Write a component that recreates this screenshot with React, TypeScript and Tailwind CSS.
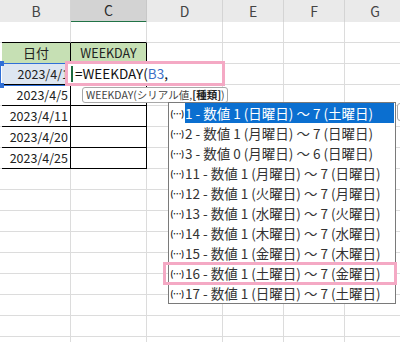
import React from "react";

const widths = [2, 69, 76, 76, 61, 61, 61];
const letters = ["", "B", "C", "D", "E", "F", "G"];

const items = [
  "1 - 数値 1 (日曜日) ～ 7 (土曜日)",
  "2 - 数値 1 (月曜日) ～ 7 (日曜日)",
  "3 - 数値 0 (月曜日) ～ 6 (日曜日)",
  "11 - 数値 1 (月曜日) ～ 7 (日曜日)",
  "12 - 数値 1 (火曜日) ～ 7 (月曜日)",
  "13 - 数値 1 (水曜日) ～ 7 (火曜日)",
  "14 - 数値 1 (木曜日) ～ 7 (水曜日)",
  "15 - 数値 1 (金曜日) ～ 7 (木曜日)",
  "16 - 数値 1 (土曜日) ～ 7 (金曜日)",
  "17 - 数値 1 (日曜日) ～ 7 (土曜日)",
];

const dates: Record<number, string> = {
  3: "2023/4/1",
  4: "2023/4/5",
  5: "2023/4/11",
  6: "2023/4/20",
  7: "2023/4/25",
};

function Cell({ r, c }: { r: number; c: number }) {
  const inTable = r >= 2 && r <= 7 && (c === 1 || c === 2);
  const rightBlack = inTable || (c === 0 && r >= 2 && r <= 7);
  const bottomBlack = inTable || (r === 1 && (c === 1 || c === 2));
  const green = r === 2 && (c === 1 || c === 2);
  const sel = r === 3 && c === 1;
  let cls =
    "h-full border-b flex items-center overflow-hidden whitespace-nowrap text-[12.5px] text-[#222] ";
  if (c === 0) {
    cls += rightBlack ? "border-r border-r-black " : "";
  } else {
    cls += rightBlack ? "border-r border-r-black " : "border-r border-r-[#dcdcdc] ";
  }
  cls += bottomBlack ? "border-b-black " : "border-b-[#dcdcdc] ";
  if (green) cls += "bg-[#c6e0b4] justify-center ";
  else if (sel) cls += "bg-[#dde6f1] justify-end pr-[1px] ";
  else cls += "bg-white justify-end pr-[2px] ";
  let text: React.ReactNode = "";
  if (r === 2 && c === 1) text = <span className="text-[13px]">日付</span>;
  if (r === 2 && c === 2) text = <span className="text-[12.5px]">WEEKDAY</span>;
  if (c === 1 && dates[r]) text = dates[r];
  return <div className={cls}>{text}</div>;
}

export default function App() {
  const rows = Array.from({ length: 16 }, (_, i) => i + 1);
  return (
    <div className="relative w-[400px] h-[342px] overflow-hidden bg-white font-['Noto_Sans_CJK_JP',sans-serif]">
      <div className="grid h-[22px] grid-cols-[2px_69px_76px_76px_61px_61px_61px] w-[406px]">
        {letters.map((l, i) => (
          <div
            key={i}
            className={
              i === 2
                ? "h-full flex items-center justify-center bg-[#d3d3d3] border-r border-r-[#c8c8c8] border-b-2 border-b-[#217346] text-[14px] text-[#2a2a2a]"
                : i === 0
                ? "h-full bg-[#eaeaea] border-b border-b-[#c8c8c8]"
                : "h-full flex items-center justify-center bg-[#eaeaea] border-r border-r-[#d4d4d4] border-b border-b-[#c8c8c8] text-[14px] text-[#444]"
            }
          >
            {l}
          </div>
        ))}
      </div>
      {rows.map((r) => (
        <div
          key={r}
          className="grid h-[21px] grid-cols-[2px_69px_76px_76px_61px_61px_61px] w-[406px]"
        >
          {widths.map((_, c) => (
            <Cell key={c} r={r} c={c} />
          ))}
        </div>
      ))}

      {/* B3 reference highlight */}
      <div className="absolute left-0 top-[63px] w-[71px] h-[23px] border-[1.5px] border-[#2f6fd6]" />
      <div className="absolute left-0 top-[61px] w-[4px] h-[5px] bg-[#2f6fd6]" />
      <div className="absolute left-0 top-[83px] w-[4px] h-[5px] bg-[#2f6fd6]" />

      {/* formula edit box */}
      <div className="absolute left-[65px] top-[61px] w-[160px] h-[25px] border-[3px] border-[#f4a9c4] bg-white flex items-center">
        <div className="ml-[3px] w-[2px] h-[16px] bg-[#1e6b3e]" />
        <div className="ml-[2px] text-[13.5px] leading-none text-[#111] whitespace-nowrap">
          =WEEKDAY(<span className="text-[#3d6fc6]">B3</span>,
        </div>
      </div>

      {/* tooltip */}
      <div className="absolute left-[82px] top-[87px] w-[146px] h-[16px] border border-[#a8a8a8] rounded-[3px] bg-white flex items-center px-[3px] text-[10.5px] leading-none text-[#444] whitespace-nowrap">
        WEEKDAY(シリアル値, <span className="font-bold text-[#222]">[種類]</span>)
      </div>

      {/* list */}
      <div className="absolute left-[168px] top-[102px] w-[228px] h-[202px] border border-[#7a7a7a] bg-white">
        {items.map((t, i) => (
          <div key={i} className="flex h-[20px] items-stretch">
            <div className="w-[16px] shrink-0 flex items-center justify-center text-[8.5px] font-bold text-[#222] leading-none tracking-[-0.5px]">
              (…)
            </div>
            <div
              className={
                i === 0
                  ? "flex-1 flex items-center bg-[#0b6fd0] text-white text-[13.5px] whitespace-nowrap mr-[1px]"
                  : "flex-1 flex items-center text-[#333] text-[13.5px] whitespace-nowrap"
              }
            >
              {t}
            </div>
          </div>
        ))}
      </div>

      {/* side tip edge */}
      <div className="absolute left-[397px] top-[103px] w-[10px] h-[18px] border border-[#a8a8a8] rounded-[3px] bg-white" />

      {/* annotation box on 16 */}
      <div className="absolute left-[163px] top-[262px] w-[234px] h-[23px] border-[3px] border-[#f4a9c4]" />
    </div>
  );
}
